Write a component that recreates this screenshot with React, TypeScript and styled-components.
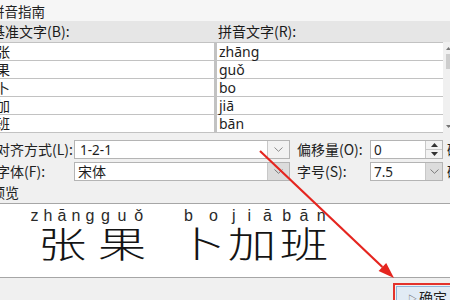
import React from 'react';
import styled, { createGlobalStyle } from 'styled-components';

const Global = createGlobalStyle`
  html, body { margin: 0; padding: 0; background: #f0f0f0; overflow: hidden; }
  body { font-family: "Noto Sans CJK SC", "Noto Sans", sans-serif; color: #1a1a1a; }
`;

const Root = styled.div`
  position: relative;
  width: 450px;
  height: 300px;
  overflow: hidden;
  background: #f0f0f0;
`;

const Dialog = styled.div`
  margin-left: -9px;
  width: 470px;
  height: 300px;
  display: flex;
  flex-direction: column;
  font-size: 14px;
`;

const TitleBar = styled.div`
  height: 21px;
  flex: none;
  background: #f6f6f6;
  display: flex;
  align-items: center;
  padding-left: 0;
  font-size: 13.5px;
  color: #222;
`;

const HeaderBand = styled.div`
  height: 21px;
  flex: none;
  background: #e6e6e6;
  display: grid;
  grid-template-columns: 223px 226px;
  column-gap: 3px;
  align-items: center;
  font-size: 14px;
`;

const HeadLabel = styled.div<{ $pad: number }>`
  padding-left: ${(p) => p.$pad}px;
  line-height: 21px;
  white-space: nowrap;
`;

const TableBody = styled.div`
  display: flex;
  flex: none;
`;

const Grid = styled.div`
  display: grid;
  grid-template-columns: 223px 226px;
  grid-auto-rows: 17px;
  column-gap: 3px;
  row-gap: 1px;
  background: #c2c2c2;
  border-top: 1px solid #c2c2c2;
  border-bottom: 1px solid #c2c2c2;
`;

const Cell = styled.div<{ $pad: number; $latin?: boolean }>`
  background: #ffffff;
  padding-left: ${(p) => p.$pad}px;
  line-height: 17px;
  font-size: 14px;
  white-space: nowrap;
  font-family: ${(p) => (p.$latin ? '"Noto Sans", "Noto Sans CJK SC", sans-serif' : '"Noto Sans CJK SC", sans-serif')};
  color: #1e1e1e;
`;

const ScrollBar = styled.div`
  margin-left: 2px;
  width: 7px;
  background: #f0f0f0;
  display: flex;
  flex-direction: column;
  align-items: center;
  padding-top: 5px;
  padding-bottom: 5px;
`;

const ScrollArrow = styled.svg`
  display: block;
  flex: none;
`;

const Thumb = styled.div`
  margin-top: 4px;
  width: 6px;
  height: 15px;
  background: #cdcdcd;
`;

const ScrollSpacer = styled.div`
  flex: 1;
`;

const Controls = styled.div`
  margin-top: 7px;
  display: flex;
  flex-direction: column;
  gap: 3px;
  flex: none;
`;

const CtrlRow = styled.div`
  display: flex;
  align-items: center;
  height: 19px;
  padding-left: 5px;
`;

const Label = styled.div<{ $w: number; $gap?: number }>`
  width: ${(p) => p.$w}px;
  margin-left: ${(p) => p.$gap ?? 0}px;
  flex: none;
  white-space: nowrap;
  font-size: 14px;
  line-height: 19px;
  color: #222;
`;

const Combo = styled.div<{ $w: number }>`
  width: ${(p) => p.$w}px;
  height: 19px;
  flex: none;
  display: flex;
  box-sizing: border-box;
  border: 1px solid #b4b4b4;
  background: #ffffff;
`;

const ComboText = styled.div<{ $pad?: number }>`
  flex: 1;
  padding-left: ${(p) => p.$pad ?? 5}px;
  font-size: 14px;
  line-height: 17px;
  white-space: nowrap;
  overflow: hidden;
  color: #1e1e1e;
`;

const LatinText = styled.span`
  font-family: "Noto Sans", sans-serif;
  font-size: 13.5px;
`;

const DropButton = styled.div<{ $w: number; $dim?: boolean }>`
  width: ${(p) => p.$w}px;
  flex: none;
  border-left: 1px solid #c8c8c8;
  background: ${(p) => (p.$dim ? '#dcdcdc' : '#f2f2f2')};
  display: flex;
  align-items: center;
  justify-content: center;
`;

const SpinButtons = styled.div`
  width: 16px;
  flex: none;
  border-left: 1px solid #c8c8c8;
  background: #f2f2f2;
  display: flex;
  flex-direction: column;
`;

const SpinHalf = styled.div<{ $top?: boolean }>`
  flex: 1;
  display: flex;
  align-items: center;
  justify-content: center;
  border-bottom: ${(p) => (p.$top ? '1px solid #c8c8c8' : 'none')};
`;

const Unit = styled.div`
  margin-left: 4px;
  font-size: 14px;
  line-height: 19px;
  white-space: nowrap;
  color: #222;
`;

const PreviewLabel = styled.div`
  margin-top: 3px;
  height: 16px;
  line-height: 16px;
  font-size: 14px;
  color: #222;
  flex: none;
`;

const PreviewBox = styled.div`
  margin-top: 3px;
  height: 75px;
  box-sizing: border-box;
  flex: none;
  background: #ffffff;
  border-top: 1px solid #a6a6a6;
  border-bottom: 1px solid #a6a6a6;
  display: flex;
  align-items: flex-start;
  padding-left: 37px;
  padding-top: 4px;
`;

const RubyGroup = styled.div<{ $w: number; $gap?: number }>`
  width: ${(p) => p.$w}px;
  margin-left: ${(p) => p.$gap ?? 0}px;
  flex: none;
  display: flex;
  flex-direction: column;
  align-items: stretch;
`;

const Pinyin = styled.div`
  height: 16px;
  display: flex;
  justify-content: space-around;
  font-family: "Liberation Sans", "DejaVu Sans", sans-serif;
  font-size: 16px;
  line-height: 16px;
  color: #2a2a2a;
`;

const Base = styled.div`
  height: 36px;
  display: flex;
  justify-content: center;
`;

const BaseChar = styled.span`
  display: inline-block;
  font-family: "Noto Sans CJK SC", sans-serif;
  font-weight: 300;
  font-size: 36px;
  line-height: 36px;
  color: #141414;
  transform: scaleX(1.35);
`;

const Footer = styled.div`
  flex: 1;
  display: flex;
  align-items: flex-start;
  padding-left: 402px;
  padding-top: 5px;
`;

const RedFrame = styled.div`
  border: 2px solid #e3322c;
  padding: 1px;
  width: 80px;
  height: 30px;
  flex: none;
`;

const OkButton = styled.div`
  height: 100%;
  box-sizing: border-box;
  border: 1px solid #8fb6dc;
  background: #e1ebf5;
  display: flex;
  align-items: flex-start;
  padding-left: 11px;
  padding-top: 1px;
  font-size: 14px;
  line-height: 18px;
  color: #1e1e1e;
  gap: 2px;
`;

const Pointer = styled.span`
  font-size: 9px;
  line-height: 22px;
  color: #5a5a5a;
`;

const Overlay = styled.svg`
  position: absolute;
  left: 0;
  top: 0;
  pointer-events: none;
`;

const Chevron = ({ dim }: { dim?: boolean }) => (
  <svg width="9" height="5" viewBox="0 0 9 5">
    <polyline points="0.5,0.5 4.5,4.3 8.5,0.5" fill="none" stroke={dim ? '#7a7a7a' : '#8a8a8a'} strokeWidth="1" />
  </svg>
);

const Tri = ({ up }: { up?: boolean }) => (
  <svg width="7" height="4" viewBox="0 0 7 4">
    <polygon points={up ? '0,4 3.5,0 7,4' : '0,0 3.5,4 7,0'} fill="#333" />
  </svg>
);

const rows: [string, string][] = [
  ['张', 'zhāng'],
  ['果', 'guǒ'],
  ['卜', 'bo'],
  ['加', 'jiā'],
  ['班', 'bān'],
];

const ruby: { ch: string; py: string; w: number; gap?: number }[] = [
  { ch: '张', py: 'zhāng', w: 69 },
  { ch: '果', py: 'guǒ', w: 50 },
  { ch: '卜', py: 'bo', w: 50, gap: 29 },
  { ch: '加', py: 'jiā', w: 52 },
  { ch: '班', py: 'bān', w: 52 },
];

export default function App() {
  return (
    <Root>
      <Global />
      <Dialog>
        <TitleBar>拼音指南</TitleBar>
        <HeaderBand>
          <HeadLabel $pad={0}>基准文字(B):</HeadLabel>
          <HeadLabel $pad={1}>拼音文字(R):</HeadLabel>
        </HeaderBand>
        <TableBody>
          <Grid>
            {rows.map(([c, p]) => (
              <React.Fragment key={c}>
                <Cell $pad={5}>{c}</Cell>
                <Cell $pad={2} $latin>{p}</Cell>
              </React.Fragment>
            ))}
          </Grid>
          <ScrollBar>
            <ScrollArrow width="5" height="3" viewBox="0 0 5 3">
              <polygon points="0,3 2.5,0 5,3" fill="#777" />
            </ScrollArrow>
            <Thumb />
            <ScrollSpacer />
            <ScrollArrow width="5" height="3" viewBox="0 0 5 3">
              <polygon points="0,0 2.5,3 5,0" fill="#777" />
            </ScrollArrow>
          </ScrollBar>
        </TableBody>
        <Controls>
          <CtrlRow>
            <Label $w={78}>对齐方式(L):</Label>
            <Combo $w={216}>
              <ComboText><LatinText>1-2-1</LatinText></ComboText>
              <DropButton $w={21}><Chevron /></DropButton>
            </Combo>
            <Label $w={73} $gap={7}>偏移量(O):</Label>
            <Combo $w={73}>
              <ComboText $pad={3}><LatinText>0</LatinText></ComboText>
              <SpinButtons>
                <SpinHalf $top><Tri up /></SpinHalf>
                <SpinHalf><Tri /></SpinHalf>
              </SpinButtons>
            </Combo>
            <Unit>磅</Unit>
          </CtrlRow>
          <CtrlRow>
            <Label $w={78}>字体(F):</Label>
            <Combo $w={216}>
              <ComboText $pad={3}>宋体</ComboText>
              <DropButton $w={21} $dim><Chevron dim /></DropButton>
            </Combo>
            <Label $w={73} $gap={7}>字号(S):</Label>
            <Combo $w={73}>
              <ComboText $pad={3}><LatinText>7.5</LatinText></ComboText>
              <DropButton $w={16} $dim><Chevron dim /></DropButton>
            </Combo>
            <Unit>磅</Unit>
          </CtrlRow>
        </Controls>
        <PreviewLabel>预览</PreviewLabel>
        <PreviewBox>
          {ruby.map((r) => (
            <RubyGroup key={r.ch} $w={r.w} $gap={r.gap}>
              <Pinyin>
                {Array.from(r.py).map((l, i) => (
                  <span key={i}>{l}</span>
                ))}
              </Pinyin>
              <Base>
                <BaseChar>{r.ch}</BaseChar>
              </Base>
            </RubyGroup>
          ))}
        </PreviewBox>
        <Footer>
          <RedFrame>
            <OkButton>
              <Pointer>▷</Pointer>
              确定
            </OkButton>
          </RedFrame>
        </Footer>
      </Dialog>
      <Overlay width="450" height="300" viewBox="0 0 450 300">
        <line x1="260" y1="151" x2="382.4" y2="267" stroke="#e5251f" strokeWidth="2.2" />
        <polygon points="394,278 386.2,263 378.6,271" fill="#e5251f" />
      </Overlay>
    </Root>
  );
}
